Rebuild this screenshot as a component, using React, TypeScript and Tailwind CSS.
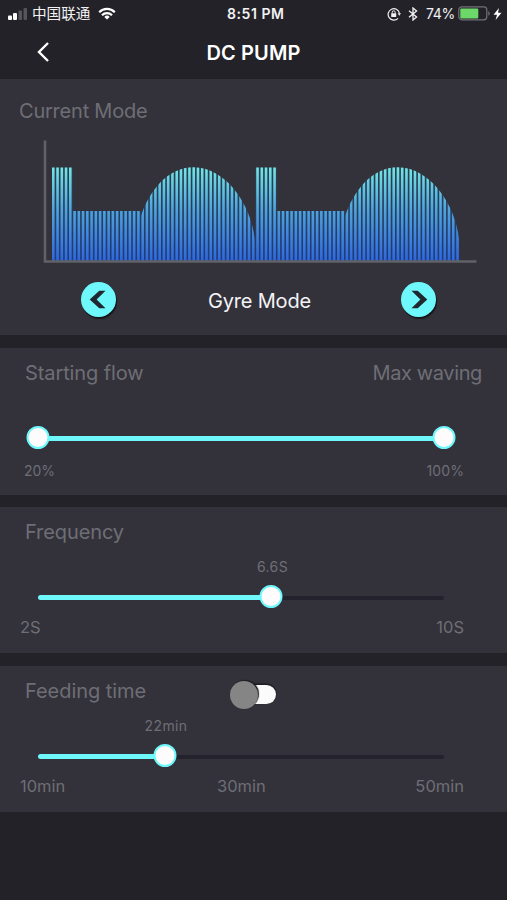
import { useState } from "react";

const PITCH = 4.255;
const PERIOD = PITCH * 48;

const Wave = () => {
  const bars = Array.from({ length: 96 }, (_, i) => 52 + i * PITCH);
  const shape =
    "M51 167.5H72.8V211H141V216C149 192 167 167.3 193.5 167.3C225 167.3 251 203 255 240V261H51Z";

  return (
    <svg width="507" height="130" viewBox="0 136 507 130" className="block">
      <defs>
        <linearGradient id="bar" gradientUnits="userSpaceOnUse" x1="0" y1="167" x2="0" y2="261">
          <stop offset="0" stopColor="#74e6e6" />
          <stop offset="0.45" stopColor="#50a4dc" />
          <stop offset="1" stopColor="#2f68dc" />
        </linearGradient>
        <linearGradient id="gap" gradientUnits="userSpaceOnUse" x1="0" y1="167" x2="0" y2="261">
          <stop offset="0" stopColor="#2b3d4a" />
          <stop offset="0.45" stopColor="#263f5c" />
          <stop offset="1" stopColor="#203c7c" />
        </linearGradient>
        <clipPath id="wave">
          <path d={shape} />
          <path d={shape} transform={`translate(${PERIOD} 0)`} />
        </clipPath>
      </defs>
      <g clipPath="url(#wave)">
        <rect x="52" y="160" width="407.5" height="101" fill="url(#gap)" />
        {bars.map((x) => (
          <rect key={x} x={x} y="160" width="2.6" height="101" fill="url(#bar)" />
        ))}
      </g>
      <path d="M45 140.5V261.5H476.5" fill="none" stroke="#606266" strokeWidth="2.6" />
    </svg>
  );
};

const StatusBar = () => (
  <div className="flex h-[27px] items-center pl-2 pr-[5px] text-[#f2f2f4]">
    <svg width="20" height="14" viewBox="0 0 20 14" className="shrink-0">
      <rect x="0" y="8.5" width="4" height="4.5" rx="1" fill="#fff" />
      <rect x="5" y="6" width="4" height="7" rx="1" fill="#fff" />
      <rect x="10.5" y="3.5" width="3.5" height="9.5" rx="1" fill="#55555b" />
      <rect x="15.5" y="1" width="3.5" height="12" rx="1" fill="#55555b" />
    </svg>
    <span className="ml-1 w-[58px] whitespace-nowrap font-['Noto_Sans_CJK_SC',sans-serif] text-[14.6px] leading-none">
      中国联通
    </span>
    <svg width="18" height="13" viewBox="0 0 18 13" className="ml-2 shrink-0" fill="none" stroke="#fff" strokeWidth="2.2">
      <path d="M1.2 5.2a11 11 0 0 1 15.6 0" />
      <path d="M4 8.2a7 7 0 0 1 10 0" />
      <path d="M9 12.6 6.3 9.9a3.8 3.8 0 0 1 5.4 0Z" fill="#fff" stroke="none" />
    </svg>
    <span className="ml-[111px] w-[60px] whitespace-nowrap text-[14px] font-semibold leading-none tracking-[0.55px]">
      8:51 PM
    </span>
    <svg width="14" height="14" viewBox="0 0 14 14" className="ml-auto shrink-0" fill="none" stroke="#f2f2f4" strokeWidth="1.2">
      <path d="M11 11.3A5.7 5.7 0 1 1 12.4 6.2" />
      <path d="M10.6 6.2h3.4l-1.7 2.6z" fill="#f2f2f4" stroke="none" />
      <rect x="4.2" y="6.3" width="5" height="3.7" rx="0.5" fill="#f2f2f4" stroke="none" />
      <path d="M5.2 6.5V5.3a1.5 1.5 0 0 1 3 0v1.2" strokeWidth="1" />
    </svg>
    <svg width="10" height="14" viewBox="0 0 10 14" className="ml-[7px] shrink-0" fill="none" stroke="#f2f2f4" strokeWidth="1.3">
      <path d="M1 3.8 8.6 10 5 13V1l3.6 3L1 10.2" />
    </svg>
    <span className="ml-2 w-[29px] whitespace-nowrap text-[14px] leading-none tracking-[-0.3px]">74%</span>
    <svg width="32" height="15" viewBox="0 0 32 15" className="ml-[3px] shrink-0">
      <rect x="0.8" y="0.8" width="28" height="13" rx="3" fill="none" stroke="#717176" strokeWidth="1.2" />
      <rect x="2.3" y="2.4" width="18" height="10" rx="1" fill="#6cd86a" />
      <path d="M30.3 5v4.8q1.4-.8 1.4-2.4t-1.4-2.4" fill="#717176" />
    </svg>
    <svg width="9" height="12" viewBox="0 0 9 12" className="ml-[3px] shrink-0" fill="#fff">
      <path d="M6 0 0.5 6.8H4L2.6 12 8.5 4.8H5Z" />
    </svg>
  </div>
);

const ModeButton = ({ next, onClick }: { next?: boolean; onClick: () => void }) => (
  <button onClick={onClick} className="size-[35px] rounded-full bg-[#6ef8fb] shadow-[1px_2px_1px_#17171c]">
    <svg width="35" height="35" viewBox="0 0 35 35" className={next ? "rotate-180" : ""}>
      <path d="M24.5 8.8H18.3L8.7 17.5L18.3 26.2H24.5L15.6 17.5Z" fill="#20272f" />
    </svg>
  </button>
);

type SliderProps = { fill: number; thumbs: number[]; label?: string };

const Slider = ({ fill, thumbs, label }: SliderProps) => (
  <div className="relative ml-[38px] h-[23px] w-[406px]">
    <div className="absolute left-0 top-[11px] h-[4px] w-full rounded-full bg-[#24232d]" />
    <div
      className="absolute left-0 top-[10px] h-[5px] rounded-full bg-[#6ef8fb]"
      style={{ width: fill }}
    />
    {label && (
      <span
        className="absolute -top-[27px] -translate-x-1/2 whitespace-nowrap text-[14px] leading-[18px] tracking-[0.35px]"
        style={{ left: thumbs[0] + 1.5 }}
      >
        {label}
      </span>
    )}
    {thumbs.map((x) => (
      <div
        key={x}
        className="absolute top-0 size-[23px] -translate-x-1/2 rounded-full border-[2.5px] border-[#6ef8fb] bg-[#fdfbfb]"
        style={{ left: x }}
      />
    ))}
  </div>
);

const modes = ["Gyre Mode"];

const App = () => {
  const [mode, setMode] = useState(0);
  const [feeding, setFeeding] = useState(false);

  const step = (n: number) => setMode((mode + n + modes.length) % modes.length);

  return (
    <div className="h-[900px] w-[507px] overflow-hidden bg-[#232229] font-[Inter,sans-serif] text-[#6e6e75]">
      <StatusBar />
      <header className="relative flex h-[52px] items-center justify-center">
        <svg width="14" height="22" viewBox="0 0 14 22" className="absolute left-[36px] top-[14px]" fill="none" stroke="#fff" strokeWidth="2.4">
          <path d="M12 2 3 11l9 9" />
        </svg>
        <h1 className="text-xl font-semibold leading-none tracking-[0.1px] text-white">DC PUMP</h1>
      </header>

      <main className="flex flex-col">
        <section className="h-[256px] bg-[#33323b]">
          <h2 className="h-[57px] pl-[19px] pt-5 text-xl leading-6 tracking-[-0.22px]">Current Mode</h2>
          <Wave />
          <div className="flex items-center justify-between pl-[81px] pr-[71px] pt-[16px]">
            <ModeButton onClick={() => step(-1)} />
            <span className="pl-0.5 pt-0.5 text-xl leading-6 tracking-[-0.2px] text-[#f4f4f6]">{modes[mode]}</span>
            <ModeButton next onClick={() => step(1)} />
          </div>
        </section>

        <section className="mt-[13px] h-[147px] bg-[#33323b]">
          <div className="flex h-[78px] justify-between px-[25px] pt-[13px] text-xl leading-6">
            <h2 className="tracking-[-0.1px]">Starting flow</h2>
            <h2 className="tracking-[-0.38px]">Max waving</h2>
          </div>
          <Slider fill={406} thumbs={[0, 405.5]} />
          <div className="flex justify-between pl-6 pr-[43px] pt-[13px] text-[14px] leading-[18px]">
            <span>20%</span>
            <span className="tracking-[0.1px]">100%</span>
          </div>
        </section>

        <section className="mt-[12px] h-[146px] bg-[#33323b]">
          <h2 className="h-[78px] pl-[25px] pt-[13px] text-xl leading-6 tracking-[-0.1px]">Frequency</h2>
          <Slider fill={232} thumbs={[233]} label="6.6S" />
          <div className="flex justify-between pl-5 pr-[43px] pt-[8px] text-[16.5px] leading-[22px]">
            <span>2S</span>
            <span>10S</span>
          </div>
        </section>

        <section className="mt-[13px] h-[146px] bg-[#33323b]">
          <div className="flex h-[78px] pl-[25px] pt-[13px]">
            <h2 className="w-[205px] text-xl leading-6 tracking-[-0.05px]">Feeding time</h2>
            <button
              onClick={() => setFeeding(!feeding)}
              className={"flex h-[28px] w-[46px] items-center " + (feeding ? "flex-row-reverse" : "")}
            >
              <span className="z-10 mt-[3px] size-[28px] shrink-0 rounded-full bg-[#858585] shadow-[1px_-1px_1px_#1c1c21]" />
              <span className="-mx-[12px] mt-[3px] h-[19px] w-[30px] shrink-0 rounded-full bg-[#fbfbfb] shadow-[0_-1px_1px_0.5px_#1c1c21]" />
            </button>
          </div>
          <Slider fill={126} thumbs={[126.5]} label="22min" />
          <div className="flex justify-between pl-5 pr-[43px] pt-[8px] text-[16.5px] leading-[22px]">
            <span>10min</span>
            <span className="pl-0.5">30min</span>
            <span>50min</span>
          </div>
        </section>
      </main>
    </div>
  );
};

export default App;
